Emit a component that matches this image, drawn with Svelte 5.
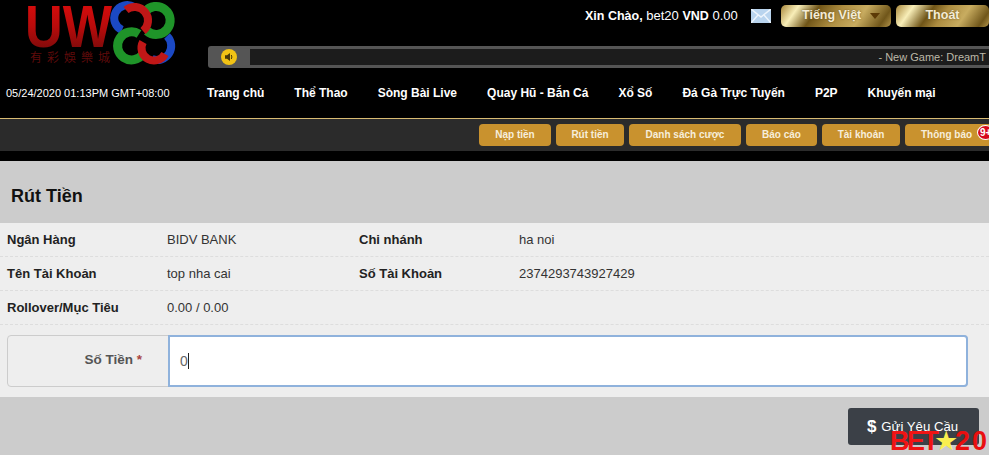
<script>
  const nav = ['Trang chủ','Thể Thao','Sòng Bài Live','Quay Hũ - Bắn Cá','Xổ Số','Đá Gà Trực Tuyến','P2P','Khuyến mại'];
  const subs = [['Nạp tiền',72],['Rút tiền',68],['Danh sách cược',112],['Báo cáo',71],['Tài khoản',78]];
</script>

<div class="page">
  <header class="top">
    <div class="brandrow">
      <div class="logo">
        <svg width="208" height="68" viewBox="0 0 208 68" aria-hidden="true">
          <defs>
            <linearGradient id="uwred" x1="0" y1="0" x2="0" y2="1">
              <stop offset="0" stop-color="#e40c0c"/>
              <stop offset=".5" stop-color="#b80b0b"/>
              <stop offset="1" stop-color="#650a0a"/>
            </linearGradient>
          </defs>
          <text class="uw" x="25" y="47" textLength="87" lengthAdjust="spacingAndGlyphs" fill="url(#uwred)">UW</text>
          <text class="cn" x="30" y="62" textLength="80" lengthAdjust="spacing">有彩娛樂城</text>
          <g fill="none" stroke-width="8">
            <path d="M134 7A13 13 0 1 0 122 30" stroke="#1b49c4"/>
            <path d="M167 36A14 14 0 0 1 152 59" stroke="#1b49c4"/>
            <path d="M145 12A14 14 0 1 1 147 31" stroke="#1f9429" stroke-width="9"/>
            <path d="M139 34A14 14 0 1 0 143 54" stroke="#1f9429" stroke-width="9"/>
            <path d="M126 10A13 13 0 0 1 143 31" stroke="#c01717"/>
            <path d="M143 42A12 12 0 0 0 165 54" stroke="#c01717"/>
          </g>
        </svg>
      </div>
      <div class="side">
        <div class="account">
          <span class="greet"><b>Xin Chào,</b> bet20 <b>VND</b> 0.00</span>
          <svg class="mail" width="20" height="14" viewBox="0 0 20 14" aria-hidden="true">
            <rect width="20" height="14" fill="#b9d4ee"/>
            <path d="M0 0L10 8L20 0M0 14L7 6M20 14L13 6" fill="none" stroke="#eef5fc" stroke-width="1.4"/>
          </svg>
          <button class="gold lang">Tiếng Việt<i class="caret"></i></button>
          <button class="gold out">Thoát</button>
        </div>
        <div class="ticker">
          <span class="sound">
            <svg width="16" height="16" viewBox="0 0 16 16" aria-hidden="true">
              <circle cx="8" cy="8" r="8" fill="#f2c315"/>
              <path d="M4 6.3h2L9 4v8L6 9.7H4z" fill="#4a3a08"/>
              <path d="M10.3 6q1.2 2 0 4" fill="none" stroke="#4a3a08"/>
            </svg>
          </span>
          <div class="track"><span>- New Game: DreamT</span></div>
        </div>
      </div>
    </div>
    <div class="navrow">
      <span class="clock">05/24/2020 01:13PM GMT+08:00</span>
      <nav>
        {#each nav as n}<a href="#top">{n}</a>{/each}
      </nav>
    </div>
  </header>

  <div class="subbar">
    {#each subs as [s, w]}
      <a href="#top" class="sub" style="width:{w}px">{s}</a>
    {/each}
    <a href="#top" class="sub last">Thông báo<span class="badge">9+</span></a>
  </div>
  <div class="gap"></div>

  <main>
    <h1>Rút Tiền</h1>
    <section class="panel">
      <div class="row">
        <b class="k">Ngân Hàng</b><span class="v">BIDV BANK</span>
        <b class="k2">Chi nhánh</b><span class="v">ha noi</span>
      </div>
      <div class="row">
        <b class="k">Tên Tài Khoản</b><span class="v">top nha cai</span>
        <b class="k2">Số Tài Khoản</b><span class="v">2374293743927429</span>
      </div>
      <div class="row">
        <b class="k">Rollover/Mục Tiêu</b><span class="v">0.00 / 0.00</span>
      </div>
      <div class="formrow">
        <div class="field">
          <label for="amt">Số Tiền <em>*</em></label>
          <div class="input" id="amt">0<i class="cursor"></i></div>
        </div>
      </div>
    </section>
    <div class="actions">
      <button class="submit"><span class="dollar">$</span>Gửi Yêu Cầu</button>
      <div class="mark"><span class="bet">BET</span><span class="star">★</span><span class="twenty">20</span></div>
    </div>
  </main>
</div>

<style>
  :global(body) { margin: 0; background: #ccc; }
  .page { width: 989px; height: 455px; overflow: hidden; font-family: "Liberation Sans", Arial, sans-serif; position: relative; }
  .top { background: #000; height: 119px; border-bottom: 1px solid #d8bb73; box-sizing: border-box; }
  .brandrow { display: flex; height: 68px; }
  .logo { width: 208px; flex: none; }
  .logo svg { display: block; }
  .uw { font: 700 60px "Liberation Sans", sans-serif; }
  .cn { font: 12px "Noto Sans CJK TC", sans-serif; fill: #5f0b0b; }
  .side { flex: 1; min-width: 0; }
  .account { height: 46px; display: flex; align-items: flex-start; padding: 5px 0 0 377px; box-sizing: border-box; color: #fff; white-space: nowrap; }
  .greet { font-size: 13px; line-height: 22px; width: 156px; flex: none; }
  .greet b { font-size: 12.5px; }
  .mail { margin: 4px 0 0 10px; flex: none; }
  .gold { border: 0; height: 22px; border-radius: 5px; padding: 0 0 3px; color: #f4ecd6; font: 700 12.5px "Liberation Sans", sans-serif; text-shadow: 0 0 2px #6a5218;
    background: linear-gradient(125deg, #a8873a 0, #f8eeb8 15px, #6f5417 32px, #ac8c40 50%, #c8ac60 70%, #70561a 90%, #b3954b 100%); }
  .lang { width: 110px; margin-left: 10px; text-align: left; padding-left: 21px; display: flex; align-items: center; }
  .out { width: 93px; margin-left: 5px; }
  .caret { display: block; border: 5px solid transparent; border-top: 6px solid #5c3a06; border-bottom: 0; margin: 3px 0 0 9px; }
  .ticker { height: 22px; background: #555; border-radius: 3px 0 0 3px; display: flex; padding: 3px 0; box-sizing: border-box; }
  .sound { width: 42px; flex: none; display: flex; padding-left: 13px; box-sizing: border-box; align-items: center; }
  .track { flex: 1; background: #1c1c1c; text-align: right; overflow: hidden; color: #bdb9a8; font-size: 11px; line-height: 16px; white-space: nowrap; padding-right: 3px; }
  .navrow { height: 50px; display: flex; align-items: flex-start; color: #fff; padding-top: 17px; box-sizing: border-box; }
  .clock { width: 207px; flex: none; padding-left: 6px; box-sizing: border-box; font-size: 11px; line-height: 16px; white-space: nowrap; }
  nav { display: flex; gap: 30px; font-size: 12px; font-weight: 700; line-height: 17px; white-space: nowrap; }
  nav a { color: #fff; text-decoration: none; }
  .subbar { height: 32px; background: #2b2b2b; display: flex; gap: 5px; padding: 5px 0 0 479px; box-sizing: border-box; overflow: hidden; }
  .sub { height: 22px; background: #c9922e; color: #f7eedb; font-size: 10px; font-weight: 700; border-radius: 4px; text-align: center; line-height: 22px; text-decoration: none; flex: none; }
  .last { width: 90px; position: relative; text-align: left; text-indent: 16px; }
  .badge { position: absolute; left: 72px; top: 1px; width: 17px; height: 15px; border-radius: 50%; background: #d6091a; border: 1px solid #fff; box-sizing: border-box; color: #fff; font-size: 10px; line-height: 13px; text-indent: 0; text-align: left; padding-left: 2px; }
  .gap { height: 10px; background: #000; }
  main { background: #ccc; }
  h1 { margin: 0; height: 62px; padding: 24px 0 0 11px; box-sizing: border-box; font-size: 18px; line-height: 22px; color: #111; font-weight: 700; }
  .panel { background: #eee; height: 174px; }
  .row { height: 34px; display: flex; align-items: center; border-bottom: 1px dashed #ddd; box-sizing: border-box; font-size: 13px; color: #333; }
  .k { width: 160px; padding-left: 7px; flex: none; box-sizing: border-box; color: #222; }
  .v { width: 192px; flex: none; color: #333; padding-left: 7px; box-sizing: border-box; }
  .k2 { width: 160px; flex: none; color: #222; padding-left: 7px; box-sizing: border-box; }
  .formrow { padding: 10px 21px 0 7px; }
  .field { display: flex; height: 52px; border: 1px solid #ccc; border-radius: 4px; box-sizing: border-box; background: #eee; }
  label { width: 160px; flex: none; text-align: right; padding-right: 26px; box-sizing: border-box; font-size: 13.5px; font-weight: 700; color: #555; line-height: 48px; }
  label em { color: #a94442; font-style: normal; }
  .input { flex: 1; background: #fff; border: 2px solid #8fb2dc; border-radius: 0 4px 4px 0; margin: -1px -1px -1px 0; color: #666; font-size: 14px; line-height: 48px; padding-left: 10px; box-sizing: border-box; }
  .cursor { display: inline-block; width: 1px; height: 16px; background: #222; vertical-align: -3px; }
  .actions { height: 58px; padding: 11px 10px 0 0; box-sizing: border-box; display: flex; justify-content: flex-end; position: relative; }
  .submit { width: 131px; height: 37px; border: 0; border-radius: 3px; background: #3b4047; color: #fff; font: 13.2px "Liberation Sans", sans-serif; padding: 0 2px 0 0; display: flex; align-items: center; justify-content: center; gap: 5px; }
  .dollar { font-weight: 700; font-size: 17px; }
  .mark { position: absolute; left: 890px; top: 32px; display: flex; align-items: center; white-space: nowrap; font-weight: 700; line-height: 24px; height: 24px; font-size: 27px; }
  .bet { color: #f01414; letter-spacing: -2.5px; width: 47px; }
  .star { color: #f9ef50; font-size: 27px; width: 18px; display: flex; justify-content: center; font-family: "DejaVu Sans", sans-serif; }
  .twenty { color: #e90f0f; letter-spacing: 2px; }
</style>
